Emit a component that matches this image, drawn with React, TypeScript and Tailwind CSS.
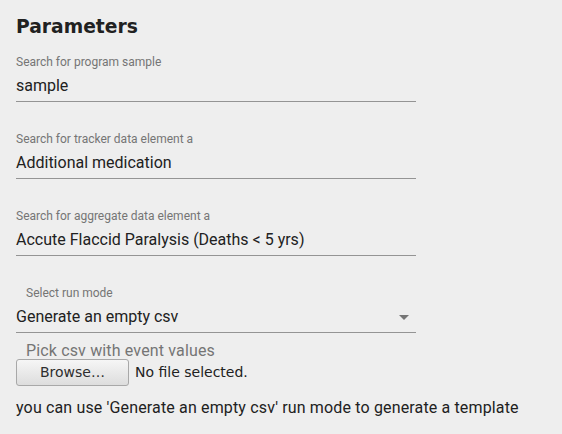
import React from 'react'

const fields = [
  { label: 'Search for program sample', value: 'sample' },
  { label: 'Search for tracker data element a', value: 'Additional medication' },
  { label: 'Search for aggregate data element a', value: 'Accute Flaccid Paralysis (Deaths < 5 yrs)' },
]

const App: React.FC = () => {
  return (
    <div className="min-h-screen w-full bg-[#eeeeee] px-4 pt-[10px] font-['Roboto',sans-serif] text-[#212121]">
      <h2 className="mt-[3px] font-['DejaVu_Sans',sans-serif] text-[18.72px] leading-7 font-bold text-[#212121]">Parameters</h2>

      <div className="mt-[13px] flex flex-col gap-[29px]">
        {fields.map((f, i) => (
          <div key={i} className="w-[400px] border-b border-[#949494] pb-[3px]">
            <div className="text-xs leading-4 text-[#757575]">{f.label}</div>
            <div className="mt-[4px] text-base leading-6">{f.value}</div>
          </div>
        ))}

        {/* run mode select */}
        <div className="w-[400px] border-b border-[#949494] pb-[3px]">
          <div className="pl-[10px] text-xs leading-4 text-[#757575]">Select run mode</div>
          <div className="mt-[4px] flex items-center justify-between text-base leading-6">
            <span>Generate an empty csv</span>
            <svg width="10" height="5" viewBox="0 0 10 5" className="mr-[7px]">
              <path d="M0 0 L10 0 L5 5 Z" fill="#757575" />
            </svg>
          </div>
        </div>
      </div>

      <div className="mt-2 pl-[10px] text-base leading-5 tracking-[0.15px] text-[#757575]">Pick csv with event values</div>
      <div className="-mt-[2px] flex items-center font-['DejaVu_Sans',sans-serif] text-[14px]">
        <button className="h-[27px] w-[113px] rounded-[3px] border border-[#a8a8a8] bg-gradient-to-b from-[#f6f6f6] to-[#dddddd] text-[#2e2e2e]">
          Browse…
        </button>
        <span className="ml-[6px] text-[#212121]">No file selected.</span>
      </div>

      <p className="mt-[10px] text-base leading-6 tracking-[0.15px]">
        you can use 'Generate an empty csv' run mode to generate a template
      </p>
    </div>
  )
}

export default App
